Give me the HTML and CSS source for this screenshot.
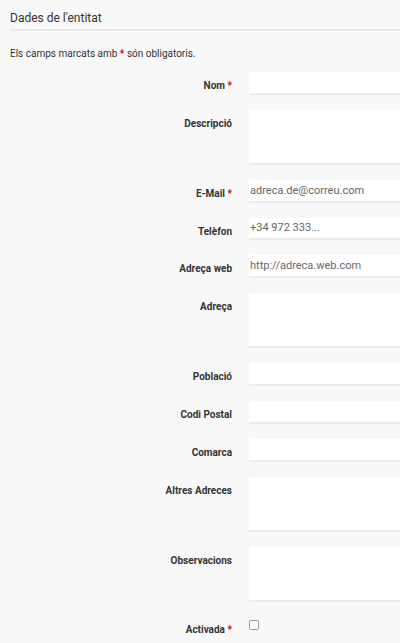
FILE: index.html
```html
<!DOCTYPE html>
<html lang="ca">
<head>
  <meta charset="UTF-8">
  <meta name="viewport" content="width=device-width, initial-scale=1.0">
  <title>Dades de l'entitat</title>
  <link rel="stylesheet" href="styles.css">
</head>
<body>
  <div class="panel">
    <h1 class="panel-title">Dades de l'entitat</h1>
    <p class="hint">Els camps marcats amb <span class="req">*</span> són obligatoris.</p>
    <form class="form">
      <div class="row">
        <label for="nom">Nom <span class="req">*</span></label>
        <input type="text" id="nom" name="nom">
      </div>
      <div class="row">
        <label for="descripcio">Descripció</label>
        <textarea id="descripcio" name="descripcio"></textarea>
      </div>
      <div class="row">
        <label for="email">E-Mail <span class="req">*</span></label>
        <input type="email" id="email" name="email" placeholder="adreca.de@correu.com">
      </div>
      <div class="row">
        <label for="telefon">Telèfon</label>
        <input type="text" id="telefon" name="telefon" placeholder="+34 972 333...">
      </div>
      <div class="row">
        <label for="web">Adreça web</label>
        <input type="text" id="web" name="web" placeholder="http://adreca.web.com">
      </div>
      <div class="row">
        <label for="adreca">Adreça</label>
        <textarea id="adreca" name="adreca"></textarea>
      </div>
      <div class="row">
        <label for="poblacio">Població</label>
        <input type="text" id="poblacio" name="poblacio">
      </div>
      <div class="row">
        <label for="cp">Codi Postal</label>
        <input type="text" id="cp" name="cp">
      </div>
      <div class="row">
        <label for="comarca">Comarca</label>
        <input type="text" id="comarca" name="comarca">
      </div>
      <div class="row">
        <label for="altres">Altres Adreces</label>
        <textarea id="altres" name="altres"></textarea>
      </div>
      <div class="row">
        <label for="observacions">Observacions</label>
        <textarea id="observacions" name="observacions"></textarea>
      </div>
      <div class="row row-check">
        <label for="activada">Activada <span class="req">*</span></label>
        <input type="checkbox" id="activada" name="activada">
      </div>
    </form>
  </div>
</body>
</html>
```

FILE: styles.css
```css
* { box-sizing: border-box; margin: 0; padding: 0; }
body {
  font-family: Roboto, 'Liberation Sans', sans-serif;
  background: #f8f8f8;
  color: #333;
  overflow: hidden;
}
.panel { padding: 9px 0 0 10px; }
.panel-title {
  font-size: 12px;
  font-weight: 400;
  line-height: 18px;
  padding-bottom: 2px;
  border-bottom: 2px solid #e9e9e9;
}
.hint {
  font-size: 10px;
  margin: 17px 0 12px;
  line-height: 12px;
}
.req { color: #c00; font-weight: bold; }
.form { margin-left: -10px; }
.row {
  display: grid;
  grid-template-columns: 232px 1fr;
  column-gap: 17px;
  margin-bottom: 15px;
}
.row label {
  text-align: right;
  font-size: 10px;
  font-weight: bold;
  padding-top: 8px;
  line-height: 12px;
}
input[type=text], input[type=email], textarea {
  width: 100%;
  height: 22.8px;
  border: none;
  border-bottom: 2px solid #ebebeb;
  background: #fff;
  padding: 0 1px;
  font-family: Roboto, 'Liberation Sans', sans-serif;
  font-size: 11px;
  color: #555;
  outline: none;
}
textarea { height: 55px; resize: none; }
input::placeholder { color: #666; opacity: 1; }
.row-check label { padding-top: 7px; }
input[type=checkbox] {
  appearance: none;
  width: 10px;
  height: 10px;
  margin-top: 3px;
  border: 1px solid #999;
  border-radius: 2px;
  background: #fff;
}
```
